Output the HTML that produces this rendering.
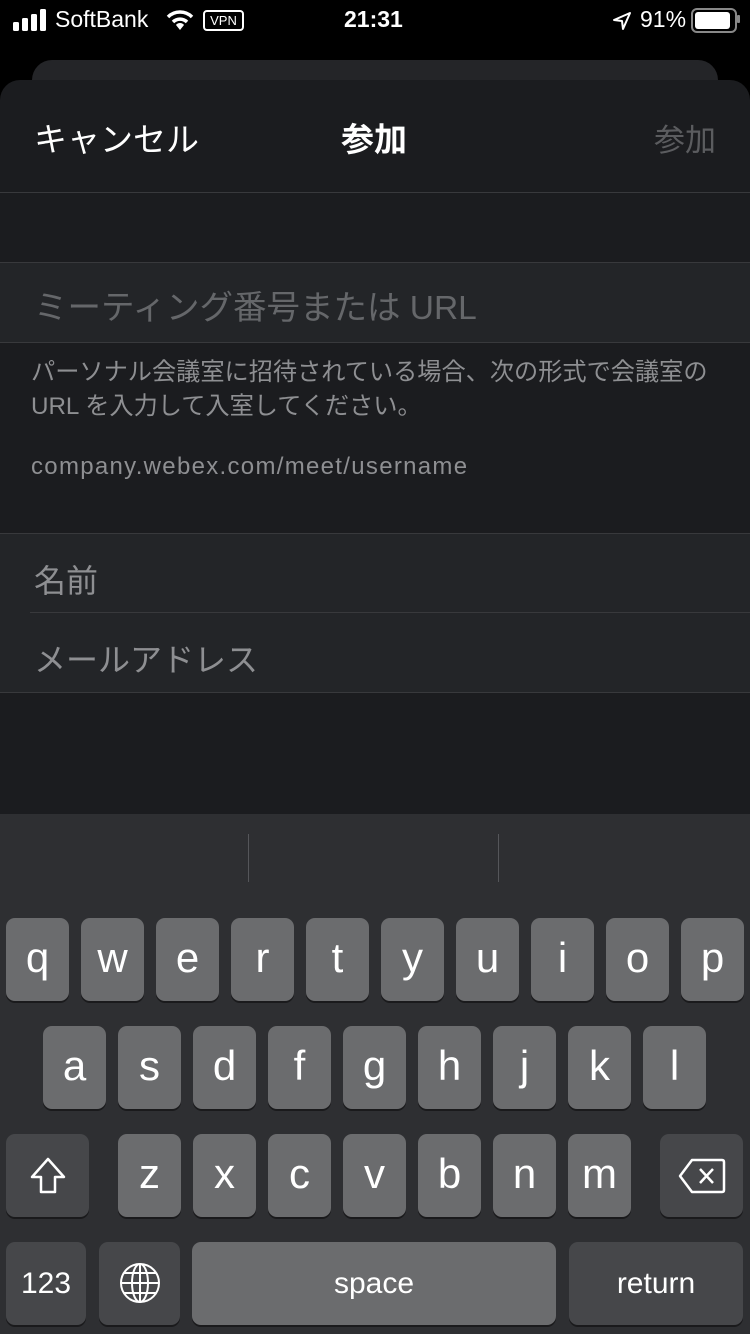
<html><head><style>
body{margin:0;width:750px;height:1334px;background:#000;overflow:hidden;position:relative;font-family:"Liberation Sans","Noto Sans CJK JP",sans-serif;color:#fff}
.a{position:absolute}
.k{position:absolute;width:63px;height:83px;background:#6b6c6e;border-radius:9px;box-shadow:0 2px 0 #1a1a1c;color:#fff;font-size:42px;text-align:center;line-height:80px}
.s{background:#46474a}
</style></head><body>
<svg class="a" style="left:13px;top:9px" width="34" height="22"><rect x="0" y="13" width="6" height="9" rx="1.5" fill="#fff"/><rect x="9" y="9" width="6" height="13" rx="1.5" fill="#fff"/><rect x="18" y="5" width="6" height="17" rx="1.5" fill="#fff"/><rect x="27" y="0" width="6" height="22" rx="1.5" fill="#fff"/></svg>
<div class="a" style="left:55px;top:6px;font-size:23px">SoftBank</div>
<svg class="a" style="left:166px;top:9px" width="28" height="22"><path d="M2 8 A17 17 0 0 1 26 8" stroke="#fff" stroke-width="3.5" fill="none"/><path d="M7 13 A10 10 0 0 1 21 13" stroke="#fff" stroke-width="3.5" fill="none"/><path d="M10 16 L14 21 L18 16 A5 5 0 0 0 10 16Z" fill="#fff"/></svg>
<div class="a" style="left:203px;top:10px;width:37px;height:17px;border:2px solid #fff;border-radius:4px;font-size:13px;text-align:center;line-height:17px">VPN</div>
<div class="a" style="left:344px;top:6px;font-size:23px;font-weight:bold">21:31</div>
<svg class="a" style="left:612px;top:11px" width="20" height="20"><path d="M18 2 L2 9 L10 10 L11 18 Z" stroke="#fff" stroke-width="2" fill="none" stroke-linejoin="round"/></svg>
<div class="a" style="left:640px;top:6px;font-size:23px">91%</div>
<div class="a" style="left:691px;top:8px;width:42px;height:21px;border:2px solid #888;border-radius:6px"><div style="margin:2px;width:35px;height:17px;background:#fff;border-radius:3px"></div></div>
<div class="a" style="left:737px;top:15px;width:3px;height:8px;background:#888;border-radius:1px"></div>

<div class="a" style="left:32px;top:60px;width:686px;height:40px;background:#242528;border-radius:20px 20px 0 0"></div>
<div class="a" style="left:0;top:80px;width:750px;height:734px;background:#1b1c1f;border-radius:20px 20px 0 0"></div>
<div class="a" style="left:34px;top:113px;font-size:33px">キャンセル</div>
<div class="a" style="left:341px;top:113px;font-size:33px;font-weight:bold">参加</div>
<div class="a" style="left:654px;top:115px;font-size:31px;color:#5b5c5f">参加</div>
<div class="a" style="left:0;top:192px;width:750px;height:1px;background:#38393c"></div>
<div class="a" style="left:0;top:262px;width:750px;height:79px;background:#232528;border-top:1px solid #38393c;border-bottom:1px solid #38393c"></div>
<div class="a" style="left:34px;top:280px;font-size:33.5px;color:#65676a">ミーティング番号または URL</div>
<div class="a" style="left:31px;top:356px;font-size:24.2px;color:#8e8f92;line-height:34px;white-space:nowrap">パーソナル会議室に招待されている場合、次の形式で会議室の<br>URL を入力して入室してください。</div>
<div class="a" style="left:31px;top:453px;font-size:24px;letter-spacing:1.3px;color:#8e8f92">company.webex.com/meet/username</div>
<div class="a" style="left:0;top:533px;width:750px;height:158px;background:#232528;border-top:1px solid #38393c;border-bottom:1px solid #38393c"></div>
<div class="a" style="left:30px;top:612px;width:720px;height:1px;background:#38393c"></div>
<div class="a" style="left:34px;top:556px;font-size:32px;color:#8e8f92">名前</div>
<div class="a" style="left:34px;top:635px;font-size:32px;color:#8e8f92">メールアドレス</div>

<div class="a" style="left:0;top:814px;width:750px;height:520px;background:#2e2f32"></div>
<div class="a" style="left:248px;top:834px;width:1px;height:48px;background:#55565a"></div>
<div class="a" style="left:498px;top:834px;width:1px;height:48px;background:#55565a"></div>

<div class="k" style="left:6px;top:918px">q</div><div class="k" style="left:81px;top:918px">w</div><div class="k" style="left:156px;top:918px">e</div><div class="k" style="left:231px;top:918px">r</div><div class="k" style="left:306px;top:918px">t</div><div class="k" style="left:381px;top:918px">y</div><div class="k" style="left:456px;top:918px">u</div><div class="k" style="left:531px;top:918px">i</div><div class="k" style="left:606px;top:918px">o</div><div class="k" style="left:681px;top:918px">p</div>
<div class="k" style="left:43px;top:1026px">a</div><div class="k" style="left:118px;top:1026px">s</div><div class="k" style="left:193px;top:1026px">d</div><div class="k" style="left:268px;top:1026px">f</div><div class="k" style="left:343px;top:1026px">g</div><div class="k" style="left:418px;top:1026px">h</div><div class="k" style="left:493px;top:1026px">j</div><div class="k" style="left:568px;top:1026px">k</div><div class="k" style="left:643px;top:1026px">l</div>
<div class="k s" style="left:6px;top:1134px;width:83px"><svg width="40" height="40" style="margin-top:22px"><path d="M20 3 L36 21 H27 V36 H13 V21 H4 Z" stroke="#fff" stroke-width="2.5" fill="none" stroke-linejoin="round"/></svg></div>
<div class="k" style="left:118px;top:1134px">z</div><div class="k" style="left:193px;top:1134px">x</div><div class="k" style="left:268px;top:1134px">c</div><div class="k" style="left:343px;top:1134px">v</div><div class="k" style="left:418px;top:1134px">b</div><div class="k" style="left:493px;top:1134px">n</div><div class="k" style="left:568px;top:1134px">m</div>
<div class="k s" style="left:660px;top:1134px;width:83px"><svg width="48" height="36" style="margin-top:24px"><path d="M14 2 H44 Q46 2 46 4 V32 Q46 34 44 34 H14 L2 18 Z" stroke="#fff" stroke-width="2.5" fill="none" stroke-linejoin="round"/><path d="M22 11 L35 25 M35 11 L22 25" stroke="#fff" stroke-width="2.5"/></svg></div>
<div class="k s" style="left:6px;top:1242px;width:80px;font-size:30px;line-height:84px">123</div>
<div class="k s" style="left:99px;top:1242px;width:81px"><svg width="42" height="42" style="margin-top:20px"><g stroke="#fff" stroke-width="2" fill="none"><circle cx="21" cy="21" r="19"/><ellipse cx="21" cy="21" rx="8" ry="19"/><path d="M21 2V40M2 21H40M5 11H37M5 31H37"/></g></svg></div>
<div class="k" style="left:192px;top:1242px;width:364px;font-size:30px;line-height:84px">space</div>
<div class="k s" style="left:569px;top:1242px;width:174px;font-size:30px;line-height:84px">return</div>
</body></html>
